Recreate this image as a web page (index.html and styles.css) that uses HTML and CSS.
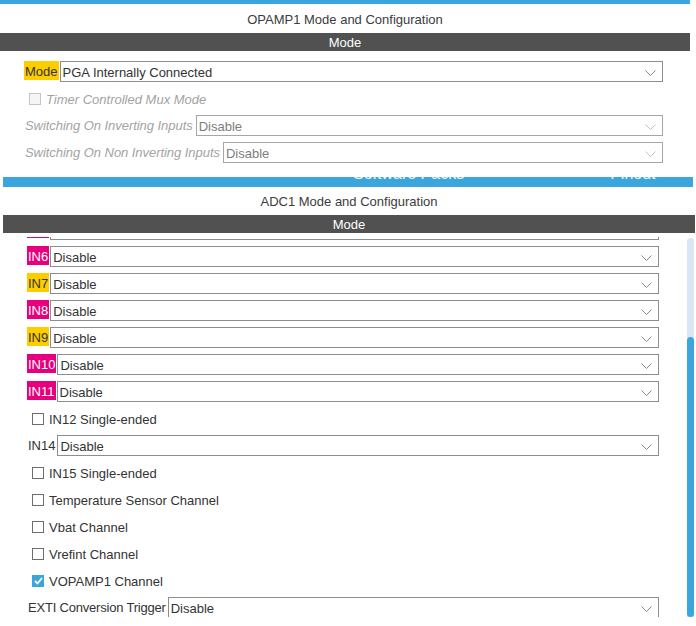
FILE: index.html
```html
<!doctype html>
<html>
  <head>
    <title>OPAMP1 / ADC1 Mode and Configuration</title>
    <link rel="stylesheet" href="styles.css">
  </head>
  <body>
    <div class="panel panel-opamp">
      <div class="window-bar"></div>
      <div class="panel-title">OPAMP1 Mode and Configuration</div>
      <div class="section-bar">Mode</div>
      <div class="form form-opamp">
        <div class="row">
          <span class="tag tag-yellow">Mode</span>
          <div class="select">
            <span class="value">PGA Internally Connected</span>
            <svg class="chevron" width="11" height="6" viewBox="0 0 11 6"><polyline points="0.5,0.5 5.5,5.5 10.5,0.5"/></svg>
          </div>
        </div>
        <div class="row disabled">
          <span class="check"></span>
          <span class="check-label">Timer Controlled Mux Mode</span>
        </div>
        <div class="row disabled">
          <span class="tag">Switching On Inverting Inputs</span>
          <div class="select">
            <span class="value">Disable</span>
            <svg class="chevron" width="11" height="6" viewBox="0 0 11 6"><polyline points="0.5,0.5 5.5,5.5 10.5,0.5"/></svg>
          </div>
        </div>
        <div class="row disabled">
          <span class="tag">Switching On Non Inverting Inputs</span>
          <div class="select">
            <span class="value">Disable</span>
            <svg class="chevron" width="11" height="6" viewBox="0 0 11 6"><polyline points="0.5,0.5 5.5,5.5 10.5,0.5"/></svg>
          </div>
        </div>
      </div>
    </div>

    <div class="panel panel-adc">
      <div class="window-bar tab-strip">
        <div class="tabs">
          <span class="tab-software">Software Packs</span>
          <span class="tab-pinout">Pinout</span>
        </div>
      </div>
      <div class="panel-title">ADC1 Mode and Configuration</div>
      <div class="section-bar">Mode</div>
      <div class="scroll-area">
        <div class="form form-adc" id="adc-form"></div>
        <div class="scrollbar"><div class="thumb"></div></div>
      </div>
    </div>

    <script src="app.js"></script>
  </body>
</html>
```

FILE: styles.css
```css
* {
  box-sizing: border-box;
  margin: 0;
  padding: 0;
}

html,
body {
  height: 100%;
  overflow: hidden;
}

body {
  font-family: 'Liberation Sans', Arial, Helvetica, sans-serif;
  font-size: 13px;
  color: #333;
  background: #fff;
}

.panel {
  display: flex;
  flex-direction: column;
  background: #fff;
}
.panel-opamp {
  width: 690px;
}
.panel-adc {
  width: 692px;
  margin-left: 3px;
}

.window-bar {
  height: 4px;
  background: #3ba6dd;
}
.tab-strip {
  height: 10px;
  margin-right: 2px;
  overflow: hidden;
}
.tabs {
  display: flex;
  margin-top: -11px;
  padding-left: 350px;
  font-size: 16px;
  line-height: 16px;
  color: #f2f8fc;
}
.tab-pinout {
  margin-left: 146px;
}

.panel-title {
  height: 29px;
  padding-top: 1px;
  line-height: 29px;
  text-align: center;
  color: #3c3c3c;
}
.panel-adc .panel-title {
  height: 28px;
  line-height: 28px;
}

.section-bar {
  height: 18px;
  padding-top: 1px;
  line-height: 18px;
  text-align: center;
  background: #505150;
  color: #fff;
}

.form {
  display: flex;
  flex-direction: column;
}
.form-opamp {
  padding: 7px 27px 11px 24px;
}
.form-adc {
  flex: 1;
  margin-top: -21px;
  padding: 0 28px 0 24px;
}

.row {
  display: flex;
  align-items: center;
  height: 27px;
  flex-shrink: 0;
}

.tag {
  align-self: flex-start;
  margin-top: 3px;
  height: 19px;
  padding: 1px 1px 0;
  line-height: 19px;
  margin-right: 1px;
  white-space: nowrap;
}
.tag-yellow {
  background: #fdcd00;
}
.tag-pink {
  background: #e6007e;
  color: #fff;
}

.select {
  flex: 1;
  display: flex;
  align-items: center;
  justify-content: space-between;
  height: 21px;
  border: 1px solid #8d8d8d;
  padding: 2px 6px 0 2px;
  background: #fff;
}
.chevron {
  fill: none;
  stroke: #8a8a8a;
  stroke-width: 1;
}

.check {
  width: 12px;
  height: 12px;
  margin-left: 5px;
  margin-right: 5px;
  border: 1px solid #6e6e6e;
  background: #fff;
  flex-shrink: 0;
}
.check.checked {
  border-color: #3ba6dd;
  background: #3ba6dd;
  display: flex;
  align-items: center;
  justify-content: center;
}
.check svg {
  fill: none;
  stroke: #fff;
  stroke-width: 1.8;
}
.check-label {
  padding-top: 2px;
}

.disabled .tag,
.disabled .check-label {
  font-style: italic;
  color: #a3a3a3;
}
.disabled .check {
  border-color: #c4c4c4;
  background: #f5f5f5;
}
.disabled .select {
  border-color: #a6a6a6;
  color: #7d7d7d;
}
.disabled .chevron {
  stroke: #c0c0c0;
}
.disabled .tag {
  margin-right: 2px;
  letter-spacing: -0.05px;
}
.tight {
  letter-spacing: -0.2px;
}

/* list viewport sits 4px below the section bar */
.scroll-area {
  display: flex;
  height: 380px;
  margin-top: 4px;
  overflow: hidden;
}

.scrollbar {
  width: 7px;
  margin: 1px 1px 0 0;
  background: #d7e7f5;
  border-radius: 3px 3px 0 0;
  display: flex;
  flex-direction: column;
  justify-content: flex-end;
}
.thumb {
  height: 280px;
  background: #3ba6dd;
  border-radius: 4px;
}
```

FILE: app.js
```javascript
// ADC1 channel list, already scrolled a little (first row is cut off)
const rows = [
  { type: 'select', label: 'IN5', tag: 'pink' },
  { type: 'select', label: 'IN6', tag: 'pink' },
  { type: 'select', label: 'IN7', tag: 'yellow' },
  { type: 'select', label: 'IN8', tag: 'pink' },
  { type: 'select', label: 'IN9', tag: 'yellow' },
  { type: 'select', label: 'IN10', tag: 'pink' },
  { type: 'select', label: 'IN11', tag: 'pink' },
  { type: 'check', label: 'IN12 Single-ended' },
  { type: 'select', label: 'IN14' },
  { type: 'check', label: 'IN15 Single-ended' },
  { type: 'check', label: 'Temperature Sensor Channel' },
  { type: 'check', label: 'Vbat Channel' },
  { type: 'check', label: 'Vrefint Channel' },
  { type: 'check', label: 'VOPAMP1 Channel', checked: true },
  { type: 'select', label: 'EXTI Conversion Trigger', tight: true }
];

const chevron =
  '<svg class="chevron" width="11" height="6" viewBox="0 0 11 6"><polyline points="0.5,0.5 5.5,5.5 10.5,0.5"/></svg>';
const tick =
  '<svg width="9" height="8" viewBox="0 0 9 8"><polyline points="1,4 3.5,6.5 8,1"/></svg>';

function buildRow(row) {
  const el = document.createElement('div');
  el.className = 'row';
  if (row.type === 'check') {
    el.innerHTML =
      '<span class="check' + (row.checked ? ' checked' : '') + '">' +
      (row.checked ? tick : '') + '</span>' +
      '<span class="check-label">' + row.label + '</span>';
  } else {
    let tagClass = row.tag ? 'tag tag-' + row.tag : 'tag';
    if (row.tight) tagClass += ' tight';
    el.innerHTML =
      '<span class="' + tagClass + '">' + row.label + '</span>' +
      '<div class="select"><span class="value">Disable</span>' + chevron + '</div>';
  }
  return el;
}

const form = document.getElementById('adc-form');
rows.forEach(row => form.appendChild(buildRow(row)));
```
